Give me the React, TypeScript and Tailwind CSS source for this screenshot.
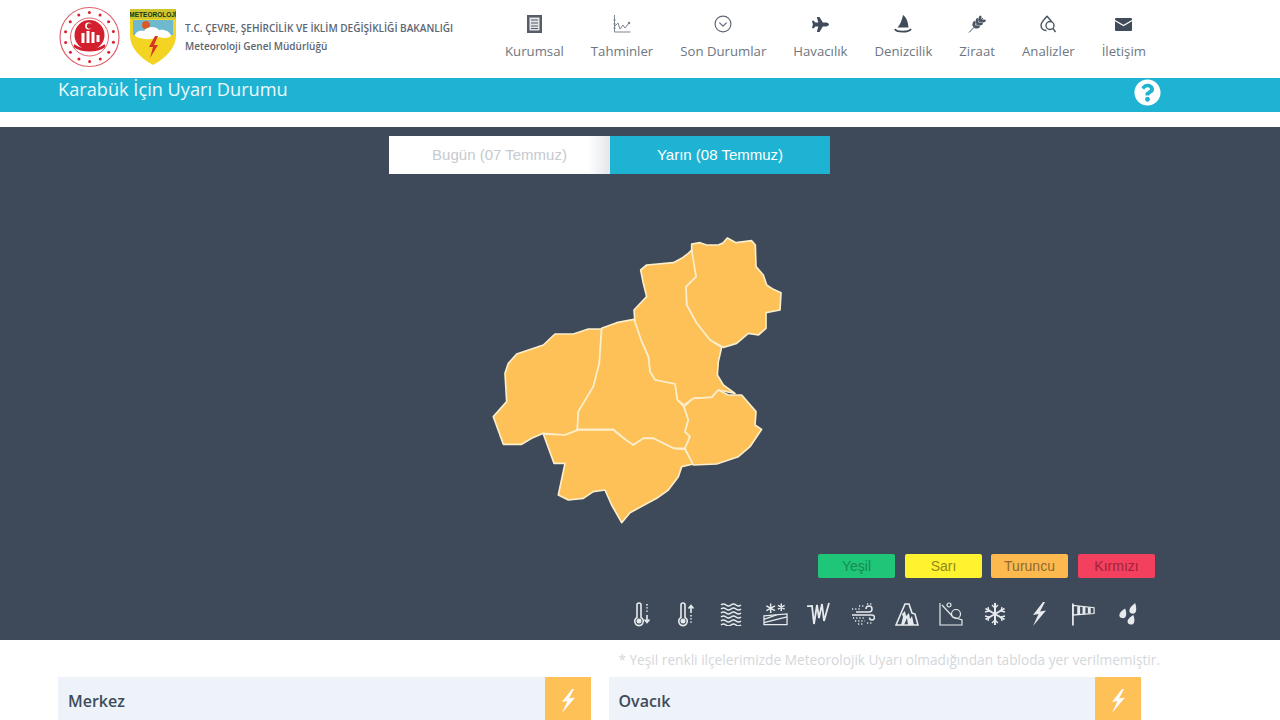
import { FaPlane, FaQuestionCircle } from "react-icons/fa";

const navItems = [
  { label: "Kurumsal", icon: <DocIcon /> },
  { label: "Tahminler", icon: <ChartIcon /> },
  { label: "Son Durumlar", icon: <CircleDownIcon /> },
  { label: "Havacılık", icon: <FaPlane className="w-[17px] h-[17px]" /> },
  { label: "Denizcilik", icon: <BoatIcon /> },
  { label: "Ziraat", icon: <WheatIcon /> },
  { label: "Analizler", icon: <DropIcon /> },
  { label: "İletişim", icon: <MailIcon /> },
];

const regions = [
  "635,42 660,38 680,45 715,45 730,38 742,24 768,38 815,32 826,45 828,110 850,135 860,165 880,178 903,188 900,240 858,248 858,295 835,315 805,310 770,340 730,352 690,330 650,280 620,225 618,170 648,140 635,75",
  "635,60 625,70 605,85 580,98 500,105 482,120 490,160 500,200 462,240 465,280 485,335 505,380 510,425 525,450 585,462 592,510 612,525 640,505 695,502 715,480 765,490 730,465 712,435 715,395 725,352 690,330 650,280 620,225 618,170 648,140",
  "365,297 358,400 340,470 295,545 292,600 255,615 190,610 155,625 125,643 70,643 40,560 80,515 75,430 85,400 110,372 190,345 225,312 280,312 325,297",
  "365,295 410,278 462,268 485,335 505,380 510,425 525,450 585,462 592,510 612,530 625,570 615,605 630,620 615,655 580,655 520,625 490,625 460,645 440,632 400,598 292,598 295,545 340,470 358,400",
  "190,612 255,615 295,600 400,600 440,632 460,645 490,625 520,625 580,655 615,658 640,702 605,710 595,740 565,780 530,805 450,848 425,878 395,825 375,780 340,785 310,805 265,810 235,795 255,700 222,700",
  "612,530 640,505 695,502 715,480 745,495 785,495 815,530 828,545 825,585 845,598 810,650 775,680 710,702 640,705 615,655 630,620 615,605 625,570",
];

const legend = [
  { label: "Yeşil", box: "bg-[#1fc678] text-[#178a52]" },
  { label: "Sarı", box: "bg-[#fff22e] text-[#8f8a1c]" },
  { label: "Turuncu", box: "bg-[#fdb94e] text-[#8f6a30] -ml-px" },
  { label: "Kırmızı", box: "bg-[#f4405f] text-[#a32238]" },
];

function DocIcon() {
  return (
    <svg viewBox="0 0 15 18" className="w-[15px] h-[18px]">
      <rect x="0" y="0" width="15" height="18" fill="#565d66" />
      <rect x="2.500" y="2.500" width="10" height="13" fill="#e4e6e8" />
      <path d="M4 5h7M4 8h7M4 11h7M4 13.500h7" stroke="#565d66" strokeWidth="1" />
    </svg>
  );
}

function ChartIcon() {
  return (
    <svg viewBox="0 0 18 18" className="w-[18px] h-[18px] text-[#7c8591]" fill="none" stroke="currentColor" strokeWidth="1">
      <path d="M1.500 0v17h16" />
      <path d="M0 5h3M0 9h3M0 13h3" strokeWidth="0.700" />
      <path d="M2 11l3-3 2 6 3-4 2 3 4-5" />
      <circle cx="16" cy="8" r="1.300" fill="currentColor" stroke="none" />
    </svg>
  );
}

function CircleDownIcon() {
  return (
    <svg viewBox="0 0 20 20" className="w-[18px] h-[18px] text-[#5f6975]" fill="none" stroke="currentColor" strokeWidth="1.300">
      <circle cx="10" cy="10" r="8.800" />
      <path d="M6 8.500l4 4 4-4" />
    </svg>
  );
}

function BoatIcon() {
  return (
    <svg viewBox="0 0 18 18" className="w-[18px] h-[18px]">
      <path d="M9 0c3 2 5 6 5.500 12.500h-11C6 10 8 5 9 0z" fill="currentColor" />
      <path d="M1 14c1 3.500 14 3.500 16 0" fill="none" stroke="currentColor" strokeWidth="1.800" />
    </svg>
  );
}

function WheatIcon() {
  return (
    <svg viewBox="0 0 18 18" className="w-[18px] h-[18px] text-[#4a5563]" fill="currentColor">
      <path d="M1 17.500L15 3" stroke="currentColor" strokeWidth="1" fill="none" />
      <ellipse cx="6" cy="9" rx="1.500" ry="3" transform="rotate(10 6 9)" />
      <ellipse cx="9" cy="6" rx="1.500" ry="3" transform="rotate(10 9 6)" />
      <ellipse cx="12" cy="3.500" rx="1.500" ry="3" transform="rotate(10 12 3.500)" />
      <ellipse cx="9" cy="12" rx="3" ry="1.500" transform="rotate(-10 9 12)" />
      <ellipse cx="12" cy="9" rx="3" ry="1.500" transform="rotate(-10 12 9)" />
      <ellipse cx="15" cy="6" rx="3" ry="1.500" transform="rotate(-10 15 6)" />
    </svg>
  );
}

function DropIcon() {
  return (
    <svg viewBox="0 0 17 18" className="w-[17px] h-[18px] text-[#4a5563]" fill="none" stroke="currentColor" strokeWidth="1.400">
      <path d="M7 1C5 4 1 7 1 10.500a5 5 0 0 0 5.500 5" />
      <path d="M7 1c1.500 2 3 3.500 4.500 5.500" />
      <circle cx="10" cy="10.500" r="4" />
      <path d="M13 13.500l2.500 3.500" />
    </svg>
  );
}

function MailIcon() {
  return (
    <svg viewBox="0 0 17 13" className="w-[17px] h-[13px]">
      <rect width="17" height="13" rx="1" fill="currentColor" />
      <path d="M0 2.500l8.500 5 8.500-5" fill="none" stroke="#fff" strokeWidth="1.100" />
    </svg>
  );
}

function MinistrySeal() {
  const dots = Array.from({ length: 14 }, (_, i) => {
    const a = (i / 14) * Math.PI * 2 + 0.22;
    return { x: 31 + 24.5 * Math.cos(a), y: 31 + 24.5 * Math.sin(a) };
  });
  return (
    <svg viewBox="0 0 62 62" className="w-[63px] h-[62px] shrink-0">
      <circle cx="31" cy="31" r="29.500" fill="none" stroke="#e0606c" strokeWidth="1.200" />
      <circle cx="31" cy="31" r="19" fill="none" stroke="#e0606c" strokeWidth="1" />
      {dots.map((d, i) => (
        <circle key={i} cx={d.x} cy={d.y} r="1.500" fill="#d8202f" />
      ))}
      <circle cx="31" cy="29" r="15" fill="#d3202e" />
      <circle cx="30" cy="20" r="3.400" fill="#fff" />
      <circle cx="31.200" cy="20" r="2.800" fill="#d3202e" />
      <path d="M23 27h3v10h-3zM28 25h3v12h-3zM33 26h3v11h-3zM38 29h3v7h-3z" fill="#fff" />
      <path d="M16 38c6 6 24 6 30 0l1 3c-8 6-24 6-32 0z" fill="#d3202e" />
    </svg>
  );
}

function MeteoLogo() {
  return (
    <svg viewBox="0 0 46 56" className="w-[46px] h-[56px] shrink-0">
      <path d="M0 0h46v26c0 14-12 24-23 30C12 50 0 40 0 26z" fill="#f4d422" />
      <rect x="0" y="0" width="46" height="10" fill="#cfc62f" />
      <text x="23" y="8" textAnchor="middle" fontSize="6.500" fontWeight="700" fill="#20301a" fontFamily="Liberation Sans, sans-serif">METEOROLOJİ</text>
      <path d="M3 11h40v15H3z" fill="#6fb9cf" />
      <circle cx="16" cy="16" r="4" fill="#d95a26" />
      <path d="M5 27c0-5 6-6 9-5 3-5 12-5 15-1 5-1 11 1 12 6-4 3-8 2-12 1-6 3-18 3-24-1z" fill="#fff" />
      <path d="M25 27l-6 11h4l-3 11 8-13h-4l4-9z" fill="#d8342a" />
    </svg>
  );
}

const iconStroke = "#e8ebee";

function ThermoIcon({ up }: { up?: boolean }) {
  return (
    <svg viewBox="0 0 24 26" className="w-[24px] h-[26px]" fill="none" stroke={iconStroke} strokeWidth="1.600">
      <path d="M6 4a2 2 0 0 1 4 0v12.500a4.300 4.300 0 1 1-4 0z" />
      <circle cx="8" cy="20" r="1.700" fill={iconStroke} />
      {up ? (
        <>
          <path d="M16 12V5M13.500 7.500L16 4.500l2.500 3" />
          <path d="M16 14v9" strokeDasharray="1.400 1.800" />
        </>
      ) : (
        <>
          <path d="M16 3v9" strokeDasharray="1.400 1.800" />
          <path d="M16 14v7M13.500 18.500L16 21.500l2.500-3" />
        </>
      )}
    </svg>
  );
}

function WavesIcon() {
  return (
    <svg viewBox="0 0 24 24" className="w-[24px] h-[24px]" fill="none" stroke={iconStroke} strokeWidth="1.500">
      <path d="M2 3q2.500-2 5 0t5 0 5 0 5 0" />
      <path d="M2 7q2.500-2 5 0t5 0 5 0 5 0" />
      <path d="M2 11q2.500-2 5 0t5 0 5 0 5 0" />
      <path d="M2 15q2.500-2 5 0t5 0 5 0 5 0" />
      <path d="M2 19q2.500-2 5 0t5 0 5 0 5 0" />
      <path d="M2 23q2.500-2 5 0t5 0 5 0 5 0" />
    </svg>
  );
}

function SnowFieldIcon() {
  return (
    <svg viewBox="0 0 26 24" className="w-[25px] h-[24px]" fill="none" stroke={iconStroke} strokeWidth="1.300">
      <path d="M1 14l24-2v11H1z" />
      <path d="M1 21L25 15M1 17.500L14 13" />
      <path d="M8 1v10M3.500 3.500l9 5M12.500 3.500l-9 5M19 1v8M15.500 3l7 4M22.500 3l-7 4" strokeWidth="1.500" />
    </svg>
  );
}

function IcicleIcon() {
  return (
    <svg viewBox="0 0 24 24" className="w-[24px] h-[24px]" fill="none" stroke={iconStroke} strokeWidth="1.800">
      <path d="M0 4c2 .5 3.500 0 5 0l2 18 3-19 2 13 3-14 2 17 5-18" />
    </svg>
  );
}

function WindDustIcon() {
  return (
    <svg viewBox="0 0 24 24" className="w-[24px] h-[24px]" fill="none" stroke={iconStroke} strokeWidth="1.500">
      <path d="M5 10h13a3 3 0 1 0-3-3M1 13h20a2.500 2.500 0 1 1-2.500 2.500" />
      <path d="M8 4h6M16 2h5M1 7h9M2 16h12M4 19h10M16 21h6M7 22h5" strokeDasharray="1.200 2" />
    </svg>
  );
}

function AvalancheIcon() {
  return (
    <svg viewBox="0 0 24 24" className="w-[24px] h-[24px]" fill="none" stroke={iconStroke} strokeWidth="1.600">
      <path d="M1 23L10 2l4 0 3 9 3 1 3 11z" />
      <path d="M7 12l3-3 1 5 3-3 1 6 2-3 2 9h-6l-1-7-3 7H6l2-8z" fill={iconStroke} stroke="none" />
    </svg>
  );
}

function RockfallIcon() {
  return (
    <svg viewBox="0 0 24 24" className="w-[24px] h-[24px]" fill="none" stroke={iconStroke} strokeWidth="1.200">
      <path d="M1 1v22h22v-5L14 15 3 3" />
      <circle cx="10" cy="3" r="2" />
      <circle cx="17" cy="12" r="4.500" />
    </svg>
  );
}

function SnowflakeIcon() {
  return (
    <svg viewBox="0 0 24 24" className="w-[24px] h-[24px]" fill="none" stroke={iconStroke} strokeWidth="2">
      <path d="M12 1v22M2.500 6.500l19 11M21.500 6.500l-19 11" />
      <path d="M9 3l3 3 3-3M9 21l3-3 3 3M2 10l4-1-1-4M22 14l-4 1 1 4M22 10l-4-1 1-4M2 14l4 1-1 4" strokeWidth="1.300" />
    </svg>
  );
}

function BoltIcon({ className }: { className: string }) {
  return (
    <svg viewBox="0 0 14 24" className={className} fill="currentColor">
      <path d="M11 0L1 13l5.500-1L1 24 14 8.500 8 9.500 13 0z" />
    </svg>
  );
}

function WindsockIcon() {
  return (
    <svg viewBox="0 0 26 24" className="w-[25px] h-[24px]" fill="none" stroke={iconStroke} strokeWidth="1.300">
      <path d="M2 1v23" strokeWidth="1.800" />
      <path d="M2 3l22 2.500v6L2 13z" />
      <path d="M8 4v8.500M13.500 4.500v7.500M19 5v6.500" strokeWidth="3" />
    </svg>
  );
}

function RainDropsIcon() {
  return (
    <svg viewBox="0 0 22 24" className="w-[20px] h-[24px]" fill={iconStroke}>
      <path d="M20 0c1 3.500 1.500 6 1 8.500a3.700 3.700 0 0 1-7.300-1.300C14.200 5 17 2.500 20 0z" />
      <path d="M9 6c1 3 1.500 5 1 7.500a3.700 3.700 0 0 1-7.300-1.300C3.200 10 6 8 9 6z" />
      <path d="M18 13c1 3 1.500 5.500 1 7.500a3.700 3.700 0 0 1-7.300-1.300C12.200 17 15 15 18 13z" />
    </svg>
  );
}

const warningIcons = [
  <ThermoIcon />,
  <ThermoIcon up />,
  <WavesIcon />,
  <SnowFieldIcon />,
  <IcicleIcon />,
  <WindDustIcon />,
  <AvalancheIcon />,
  <RockfallIcon />,
  <SnowflakeIcon />,
  <BoltIcon className="w-[14px] h-[24px] text-[#e8ebee]" />,
  <WindsockIcon />,
  <RainDropsIcon />,
];

export default function App() {
  return (
    <div className="w-[1280px] h-[720px] overflow-hidden bg-white font-['Open_Sans',sans-serif]">
      <header className="h-[78px] flex pl-[58px]">
        <div className="flex items-center gap-[9px] w-[447px] shrink-0 pb-[4px]">
          <MinistrySeal />
          <MeteoLogo />
          <div className="flex flex-col gap-[5px] whitespace-nowrap text-[#5b6673]">
            <span className="text-[10.050px] leading-[14px] font-semibold">
              T.C. ÇEVRE, ŞEHİRCİLİK VE İKLİM DEĞİŞİKLİĞİ BAKANLIĞI
            </span>
            <span className="text-[10px] leading-[13px] font-semibold">Meteoroloji Genel Müdürlüğü</span>
          </div>
        </div>
        <nav className="flex gap-[27px] pt-[15px]">
          {navItems.map((item) => (
            <div key={item.label} className="flex flex-col items-center whitespace-nowrap">
              <div className="h-[18px] flex items-center text-[#3f4b5a]">{item.icon}</div>
              <span className="mt-[9px] text-[13.200px] leading-[18px] text-[#6d7681]">{item.label}</span>
            </div>
          ))}
        </nav>
      </header>

      <div className="h-[34px] bg-[#1fb3d3] flex items-center justify-between pl-[58px] pr-[119px]">
        <h1 className="text-[18.200px] leading-[24px] text-[#eefafc] -mt-[12px]">Karabük İçin Uyarı Durumu</h1>
        <FaQuestionCircle className="w-[27px] h-[27px] text-white -mt-[5px]" />
      </div>

      <main className="mt-[15px] h-[513px] bg-[#3e4a59] pt-[9px] flex flex-col">
        <div className="flex ml-[389px] font-['Liberation_Sans',sans-serif] text-[15px]">
          <div className="w-[221px] h-[38px] flex items-center justify-center bg-gradient-to-r from-white from-90% to-[#e3e6ea] text-[#c6cacf]">
            Bugün (07 Temmuz)
          </div>
          <div className="w-[220px] h-[38px] flex items-center justify-center bg-[#1fb3d3] text-white">
            Yarın (08 Temmuz)
          </div>
        </div>

        <svg viewBox="0 0 930 900" className="w-[310px] h-[300px] ml-[480px] mt-[56px]">
          {regions.map((points, i) => (
            <polygon key={i} points={points} fill="#fdc158" stroke="#fbeecb" strokeWidth="5" strokeLinejoin="round" />
          ))}
        </svg>

        <div className="mt-[24px] flex justify-end gap-[10px] pr-[125px] font-['Liberation_Sans',sans-serif] text-[14px]">
          {legend.map((item) => (
            <div key={item.label} className={`w-[77px] h-[24px] rounded-[2px] flex items-center justify-center ${item.box}`}>
              {item.label}
            </div>
          ))}
        </div>

        <div className="mt-[23px] ml-[621px] flex">
          {warningIcons.map((icon, i) => (
            <div key={i} className="w-[44px] h-[26px] flex items-center justify-center">
              {icon}
            </div>
          ))}
        </div>
      </main>

      <section className="pl-[58px]">
        <p className="mt-[11px] pr-[120px] text-right text-[13.700px] leading-[18px] text-[#d3d7db]">
          * Yeşil renkli ilçelerimizde Meteorolojik Uyarı olmadığından tabloda yer verilmemiştir.
        </p>
        <div className="mt-[8px] mr-[139px] flex gap-[18px]">
          {["Merkez", "Ovacık"].map((name) => (
            <div key={name} className="flex-1 h-[48px] bg-[#edf3f8] flex items-center justify-between pl-[10px]">
              <span className="text-[16px] font-semibold text-[#3f4b5a]">{name}</span>
              <div className="w-[46px] h-full bg-[#fdc158] flex items-center justify-center text-white">
                <BoltIcon className="w-[14px] h-[24px]" />
              </div>
            </div>
          ))}
        </div>
      </section>
    </div>
  );
}
